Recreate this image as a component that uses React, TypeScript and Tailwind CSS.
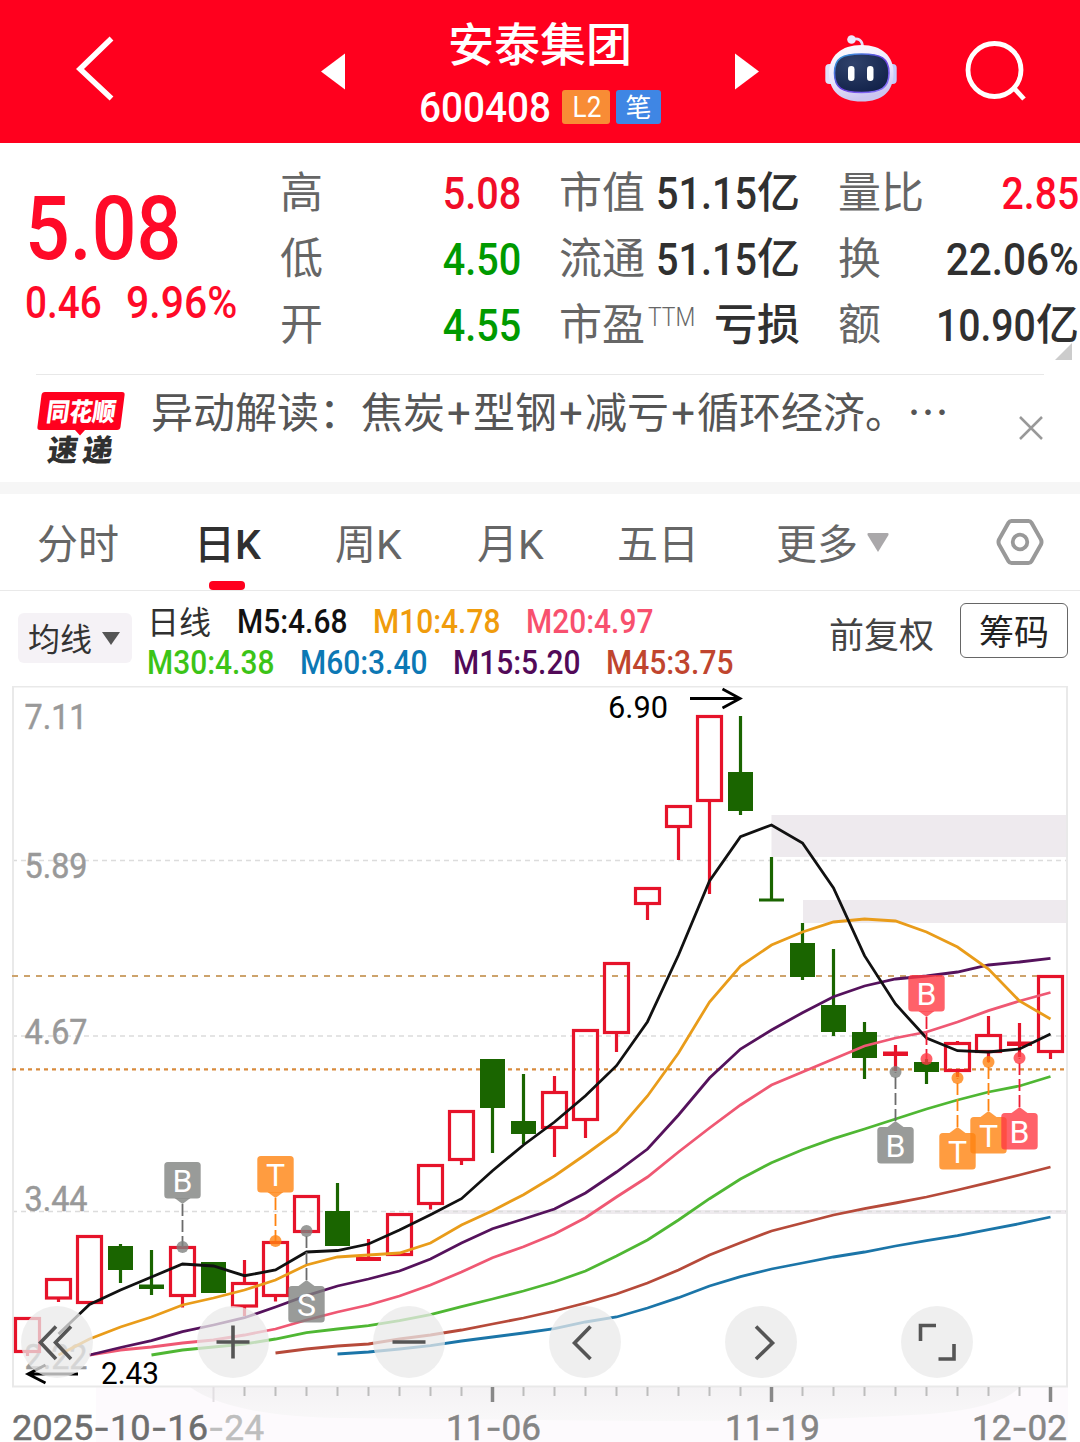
import type { ReactNode } from "react";

type Candle = {
  top: number;
  bottom: number;
  high?: number;
  low?: number;
  up: boolean;
};

const up = (top: number, bottom: number, high?: number, low?: number): Candle => ({
  top,
  bottom,
  high,
  low,
  up: true,
});
const down = (top: number, bottom: number, high?: number, low?: number): Candle => ({
  top,
  bottom,
  high,
  low,
  up: false,
});

const candles: Candle[] = [
  up(1317, 1353, undefined, 1356),
  up(1278, 1299.5, undefined, 1302),
  up(1235, 1304),
  down(1246, 1270, 1244, 1283),
  down(1284.5, 1289, 1250, 1295),
  up(1246, 1297, undefined, 1307.5),
  down(1262, 1293),
  up(1282, 1307.5, 1260, 1316),
  up(1241, 1297, undefined, 1301.5),
  up(1195, 1233),
  down(1211, 1246, 1183),
  up(1257, 1261, 1239),
  up(1213, 1256),
  up(1164, 1205, undefined, 1209.5),
  up(1110, 1161, undefined, 1165),
  down(1059, 1108, undefined, 1153),
  down(1121, 1134, 1074, 1144),
  up(1091, 1129, 1076, 1157),
  up(1029, 1121, undefined, 1138),
  up(962, 1034, undefined, 1052),
  up(887, 905, undefined, 920),
  up(805, 828, undefined, 860),
  up(715, 802, undefined, 894),
  down(772, 811, 716, 815),
  down(898.5, 901.5, 857),
  down(943, 977, 923, 980),
  down(1005, 1032, 949, 1036),
  down(1032, 1058, 1022, 1079),
  up(1051.5, 1056, 1045, 1071),
  down(1062, 1072, 1059, 1084),
  up(1042, 1072, 1041, 1077),
  up(1034, 1053, 1016, 1062),
  up(1041.5, 1046, 1023, 1057),
  up(975, 1053, undefined, 1059),
];

const averages = [
  {
    color: "#1b75a8",
    from: 10,
    ys: [1354, 1352, 1349, 1345.7, 1341, 1337, 1333, 1328.7, 1322, 1317, 1308, 1297.7, 1286, 1276.7, 1269, 1263, 1257, 1252, 1246, 1240.7, 1235.7, 1229.7, 1223.7, 1217],
  },
  {
    color: "#b64a3a",
    from: 8,
    ys: [1353, 1349, 1346, 1344, 1339, 1335, 1330, 1324, 1318, 1311, 1303, 1294, 1283, 1270, 1255, 1242.7, 1231, 1223, 1215, 1208.7, 1203, 1197, 1190, 1182.7, 1175, 1167],
  },
  {
    color: "#4fb733",
    from: 4,
    ys: [1355, 1350, 1347, 1344, 1339, 1332.7, 1329, 1325.7, 1320.7, 1314.7, 1306.7, 1299, 1291, 1282, 1271, 1256, 1240, 1220, 1198.7, 1179, 1162.7, 1149.7, 1138.7, 1129, 1119, 1109, 1100, 1092, 1086, 1076.5],
  },
  {
    color: "#ef5873",
    from: 2,
    ys: [1355, 1350, 1347, 1343, 1340, 1335, 1329, 1320, 1312, 1305, 1296, 1285, 1272, 1257.7, 1246.7, 1234, 1217.7, 1197, 1177, 1152, 1128, 1105, 1085, 1072, 1059, 1046, 1038, 1032, 1022, 1010.7, 1001, 992.5],
  },
  {
    color: "#55125c",
    from: 2,
    ys: [1355, 1347.5, 1340.7, 1331.7, 1325, 1317.7, 1307, 1295.7, 1286, 1279, 1271, 1259, 1243, 1228.7, 1219, 1209, 1193, 1172, 1149, 1115, 1078, 1049, 1030, 1012.7, 996.7, 986, 979, 976, 972, 965, 962, 958.3],
  },
  {
    color: "#e99c1a",
    from: 1,
    ys: [1355, 1339, 1327, 1317, 1305, 1298, 1290, 1280, 1265, 1257, 1255, 1253, 1243, 1225, 1210.7, 1194.7, 1176, 1154.5, 1132, 1096, 1053, 1002, 966, 945, 932, 922, 919, 921, 932, 947, 969, 1001, 1019],
  },
  {
    color: "#111111",
    from: 1,
    ys: [1334, 1304.5, 1290, 1277, 1264, 1266, 1275.7, 1270, 1252, 1250.5, 1244, 1230, 1214.7, 1198.7, 1170.7, 1145, 1122, 1095.7, 1065.7, 1021.7, 955, 881, 836.7, 825, 843, 888, 955.7, 1004, 1038, 1050.7, 1052, 1049, 1034],
  },
];

const tags = [
  { i: 5, y: 1162, dot: 1247, label: "B", fill: "#7f827f", line: "#6b6b6b" },
  { i: 8, y: 1156, dot: 1241, label: "T", fill: "#ff8310", line: "#ff8310" },
  { i: 9, y: 1286, dot: 1231, label: "S", fill: "#7f827f", line: "#6b6b6b" },
  { i: 28, y: 1127, dot: 1072, label: "B", fill: "#7f827f", line: "#6b6b6b" },
  { i: 29, y: 975, dot: 1059, label: "B", fill: "#ff3a43", line: "#ee1c34" },
  { i: 30, y: 1133, dot: 1078, label: "T", fill: "#ff8310", line: "#ff8310" },
  { i: 31, y: 1117, dot: 1062, label: "T", fill: "#ff8310", line: "#ff8310" },
  { i: 32, y: 1113, dot: 1058, label: "B", fill: "#ff3a43", line: "#ee1c34" },
];

const priceLabels = [
  { text: "7.11", y: 728.5 },
  { text: "5.89", y: 878 },
  { text: "4.67", y: 1044 },
  { text: "3.44", y: 1211 },
  { text: "2.22", y: 1368.5 },
];

const xAt = (i: number) => 27.5 + 31 * i;

const Num = ({ children, className = "" }: { children: ReactNode; className?: string }) => (
  <span className={`inline-block whitespace-nowrap font-medium ${className}`}>{children}</span>
);

const Robot = () => (
  <svg width="72" height="68" viewBox="0 0 72 68">
    <defs>
      <linearGradient id="shell" x1="0" y1="0" x2="0.3" y2="1">
        <stop offset="0" stopColor="#ffffff" />
        <stop offset="0.6" stopColor="#ebe6fc" />
        <stop offset="1" stopColor="#cbc5f0" />
      </linearGradient>
      <linearGradient id="rim" x1="0" y1="0" x2="1" y2="1">
        <stop offset="0" stopColor="#2ba7d8" />
        <stop offset="0.5" stopColor="#6b3fe0" />
        <stop offset="1" stopColor="#8a7bff" />
      </linearGradient>
      <radialGradient id="visor" cx="0.35" cy="0.25" r="0.8">
        <stop offset="0" stopColor="#30426b" />
        <stop offset="1" stopColor="#12224a" />
      </radialGradient>
    </defs>
    <path d="M27 4.500 C33 2.500 37.500 5 37.500 12" fill="none" stroke="#e9e2fb" strokeWidth="2.800" />
    <circle cx="26.500" cy="4.500" r="4.300" fill="#eee8fc" />
    <rect x="0.300" y="29" width="10" height="20" rx="4" fill="#e2e0fa" />
    <rect x="61.700" y="29" width="10" height="20" rx="4" fill="#c4cbfa" />
    <path
      d="M36.500 10 C57 10 68.500 21 68.500 38 C68.500 56 58 66.500 36.500 66.500 C15 66.500 4 56 4 38 C4 21 16 10 36.500 10 Z"
      fill="url(#shell)"
    />
    <path
      d="M36.500 19 C56 19 64 23 64 38 C64 53 56 57.500 36.500 57.500 C17 57.500 9.500 53 9.500 38 C9.500 23 17 19 36.500 19 Z"
      fill="url(#visor)"
      stroke="url(#rim)"
      strokeWidth="1.600"
    />
    <rect x="23" y="31" width="6.500" height="15" rx="3.250" fill="#fff" />
    <rect x="42" y="31" width="6.500" height="15" rx="3.250" fill="#fff" />
  </svg>
);

const Header = () => (
  <header className="flex h-[143px] items-start bg-[#ff001e] text-white">
    <svg className="mt-[35px] ml-[75px]" width="40" height="67" viewBox="0 0 40 67">
      <path d="M36.500 3.500 L5 34 L36.500 63.500" fill="none" stroke="#fff" strokeWidth="5.500" />
    </svg>
    <svg className="mt-[53px] ml-[206px]" width="24" height="37" viewBox="0 0 24 37">
      <path d="M0 18.500 L24 0.500 V36.500 Z" fill="#fff" />
    </svg>
    <div className="ml-[63px] flex w-[264px] flex-col items-center">
      <h1 className="mt-[17px] text-[46px] leading-[56px] font-medium">安泰集团</h1>
      <div className="mt-[9px] flex h-[50px] w-full items-center pl-[11px]">
        <span className="w-[143px]">
          <Num className="origin-left scale-x-90 text-[43px] leading-[50px]">600408</Num>
        </span>
        <span className="flex h-[34px] w-[48px] items-center justify-center rounded-[3px] bg-[#f88c35] pl-px text-[29px] leading-none">
          <span className="inline-block scale-x-90">L2</span>
        </span>
        <span className="ml-[6px] flex h-[34px] w-[45px] items-center justify-center rounded-[3px] bg-[#3f86e4] pt-[2px] text-[26px] leading-none">
          笔
        </span>
      </div>
    </div>
    <svg className="mt-[53px] ml-[63px]" width="24" height="37" viewBox="0 0 24 37">
      <path d="M24 18.500 L0 0.500 V36.500 Z" fill="#fff" />
    </svg>
    <div className="mt-[35px] ml-[66px]">
      <Robot />
    </div>
    <svg className="mt-[39px] ml-[68px]" width="64" height="64" viewBox="0 0 64 64">
      <circle cx="29.500" cy="31" r="26.500" fill="none" stroke="#fff" strokeWidth="4.800" />
      <path d="M48 48 L59 60" stroke="#fff" strokeWidth="4.800" />
    </svg>
  </header>
);

const Cell = ({ label, children }: { label: ReactNode; children: ReactNode }) => (
  <div className="flex h-[66px] items-center justify-between">
    <span className="text-[43px] text-[#666]">{label}</span>
    <span className="flex items-center text-[43px] font-medium text-[#303030]">{children}</span>
  </div>
);

const Quote = () => (
  <section className="relative flex h-[231px] pt-[17px] leading-none">
    <div className="w-[280px] pl-[25px] text-[#ff0a28]">
      <div className="mt-[24px] h-[90px]">
        <Num className="origin-left scale-x-[0.885] text-[89px] leading-[90px]">5.08</Num>
      </div>
      <div className="mt-[4px] flex text-[44px] leading-[50px]">
        <span className="w-[101px]">
          <Num className="origin-left scale-x-[0.88]">0.46</Num>
        </span>
        <Num className="origin-left scale-x-[0.93]">9.96%</Num>
      </div>
    </div>
    <div className="w-[241px]">
      <Cell label="高">
        <Num className="origin-right scale-x-[0.88] text-[45px] text-[#f00d28]">5.08</Num>
      </Cell>
      <Cell label="低">
        <Num className="origin-right scale-x-[0.88] text-[45px] text-[#009a00]">4.50</Num>
      </Cell>
      <Cell label="开">
        <Num className="origin-right scale-x-[0.88] text-[45px] text-[#009a00]">4.55</Num>
      </Cell>
    </div>
    <div className="ml-[38px] w-[241px]">
      <Cell label="市值">
        <span className="w-[101px]">
          <Num className="origin-left scale-x-[0.88] text-[45px]">51.15</Num>
        </span>
        亿
      </Cell>
      <Cell label="流通">
        <span className="w-[101px]">
          <Num className="origin-left scale-x-[0.88] text-[45px]">51.15</Num>
        </span>
        亿
      </Cell>
      <Cell
        label={
          <>
            市盈
            <span className="relative -top-[14px] ml-[3px] inline-block w-[46px] origin-left scale-x-[0.88] text-[26px] font-light">
              TTM
            </span>
          </>
        }
      >
        亏损
      </Cell>
    </div>
    <div className="ml-[38px] w-[241px]">
      <Cell label="量比">
        <Num className="origin-right scale-x-[0.87] text-[45px] text-[#ff0a28]">2.85</Num>
      </Cell>
      <Cell label="换">
        <Num className="origin-right scale-x-[0.9] text-[45px]">22.06%</Num>
      </Cell>
      <Cell label="额">
        <Num className="origin-right scale-x-[0.87] text-[45px]">10.90</Num>亿
      </Cell>
    </div>
    <svg className="absolute top-[200px] left-[1055px]" width="17" height="17" viewBox="0 0 17 17">
      <path d="M17 0 V17 H0 Z" fill="#ccc" />
    </svg>
  </section>
);

const Plus = () => <span className="inline-block w-[28px] text-center">+</span>;

const News = () => (
  <section className="mx-[36px] flex h-[108px] border-t border-[#e8e8e8]">
    <svg className="mt-[16px] shrink-0" width="90" height="76" viewBox="36 391 90 76">
      <path
        d="M45 392 H122 Q125 392 124.600 395 L120.500 427 Q120 430 117 430 H85 L80 435.500 L75 430 H40 Q37 430 37.400 427 L41.500 395 Q42 392 45 392 Z"
        fill="#ff001e"
      />
      <text
        transform="translate(45.500 420.500) skewX(-8)"
        fontSize="25.500"
        fontWeight="900"
        fill="#fff"
        textLength="69"
        lengthAdjust="spacingAndGlyphs"
      >
        同花顺
      </text>
      <text
        transform="translate(46.500 461) skewX(-8)"
        fontSize="30"
        fontWeight="900"
        fill="#303030"
        textLength="65"
      >
        速递
      </text>
    </svg>
    <p className="ml-[25px] w-[830px] shrink-0 whitespace-nowrap pt-[7px] text-[42px] leading-[56px] text-[#555]">
      异动解读：焦炭
      <Plus />
      型钢
      <Plus />
      减亏
      <Plus />
      循环经济。
      <span className="font-['Noto_Sans_CJK_SC']">⋯</span>
    </p>
    <svg className="mt-[41px] ml-[38px] shrink-0" width="24" height="24" viewBox="0 0 24 24">
      <path d="M1 1 L23 23 M23 1 L1 23" stroke="#999" strokeWidth="2.500" />
    </svg>
  </section>
);

const Tabs = () => (
  <nav className="relative flex h-[97px] items-center border-b border-[#e9e9e9] pl-[37px] text-[41px] leading-none text-[#666]">
    <div className="flex pt-[6px]">
      <span className="w-[157px]">分时</span>
      <span className="w-[141px] font-medium text-[#303030]">日K</span>
      <span className="w-[142px]">周K</span>
      <span className="w-[140px]">月K</span>
      <span className="w-[159px]">五日</span>
      <span className="w-[91px]">更多</span>
    </div>
    <svg width="22" height="19" viewBox="0 0 22 19">
      <path d="M1.500 0 H20.500 Q22 0 21.500 2 L11 19 L0.500 2 Q0 0 1.500 0 Z" fill="#aaa8aa" />
    </svg>
    <svg className="ml-[107px]" width="48" height="48" viewBox="0 0 48 48">
      <path
        d="M15.500 3 H32.500 Q34.500 3 35.500 4.800 L45 21.500 Q46 24 45 26.500 L35.500 43.200 Q34.500 45 32.500 45 H15.500 Q13.500 45 12.500 43.200 L3 26.500 Q2 24 3 21.500 L12.500 4.800 Q13.500 3 15.500 3 Z"
        fill="none"
        stroke="#999"
        strokeWidth="4"
      />
      <circle cx="24" cy="24" r="7.300" fill="none" stroke="#999" strokeWidth="3.800" />
    </svg>
    <span className="absolute bottom-0 left-[209px] h-[9px] w-[36px] rounded-[4px] bg-[#ff001e]" />
  </nav>
);

const Legend = () => (
  <section className="flex h-[95px] text-[34px] leading-[41px]">
    <div className="mt-[22px] ml-[18px] flex h-[50px] w-[114px] items-center rounded-[6px] bg-[#f5f2f6] pl-[10px] text-[32px] text-[#333]">
      <span className="pt-[5px]">均线</span>
      <svg className="ml-[10px]" width="18" height="13" viewBox="0 0 18 13">
        <path d="M0 0 H18 L9 13 Z" fill="#555" />
      </svg>
    </div>
    <div className="ml-[15px] w-[682px] pt-[10px]">
      <div className="flex h-[41px]">
        <span className="w-[90px] pt-[2px] text-[32px] text-[#303030]">日线</span>
        <span className="w-[136px] text-[#111]">
          <Num className="origin-left scale-x-[0.88]">M5:4.68</Num>
        </span>
        <span className="w-[153px] text-[#f09c0c]">
          <Num className="origin-left scale-x-[0.88]">M10:4.78</Num>
        </span>
        <span className="text-[#f8506e]">
          <Num className="origin-left scale-x-[0.88]">M20:4.97</Num>
        </span>
      </div>
      <div className="flex h-[41px]">
        <span className="w-[153px] text-[#3cc417]">
          <Num className="origin-left scale-x-[0.88]">M30:4.38</Num>
        </span>
        <span className="w-[153px] text-[#0c78b4]">
          <Num className="origin-left scale-x-[0.88]">M60:3.40</Num>
        </span>
        <span className="w-[153px] text-[#520a58]">
          <Num className="origin-left scale-x-[0.88]">M15:5.20</Num>
        </span>
        <span className="text-[#c0452e]">
          <Num className="origin-left scale-x-[0.88]">M45:3.75</Num>
        </span>
      </div>
    </div>
    <span className="mt-[25px] w-[131px] text-[35px] text-[#444]">前复权</span>
    <button className="mt-[12px] h-[55px] w-[108px] rounded-[6px] border border-[#666] pt-[6px] text-[35px] leading-none text-[#222]">
      筹码
    </button>
  </section>
);

const CandleShape = ({ candle, i }: { candle: Candle; i: number }) => {
  const x = xAt(i);
  const { top, bottom, high, low } = candle;
  const color = candle.up ? "#e6132a" : "#1a6500";
  const flat = bottom - top < 6;
  return (
    <g>
      {high !== undefined && (
        <path d={`M${x} ${high} V${top + 1}`} stroke={color} strokeWidth="3.200" />
      )}
      {low !== undefined && (
        <path d={`M${x} ${bottom - 1} V${low}`} stroke={color} strokeWidth="3.200" />
      )}
      {candle.up && !flat ? (
        <rect
          x={x - 12}
          y={top + 1.5}
          width="24"
          height={bottom - top - 3}
          fill="none"
          stroke={color}
          strokeWidth="3.200"
        />
      ) : (
        <rect x={x - 12.5} y={top} width="25" height={bottom - top} fill={color} />
      )}
    </g>
  );
};

const DateLabel = ({ x, width, fill, text }: { x: number; width: number; fill: string; text: string }) => (
  <text
    x={x}
    y="1440"
    fontSize="35"
    fill={fill}
    stroke={fill}
    strokeWidth="0.500"
    textLength={width}
    lengthAdjust="spacingAndGlyphs"
  >
    {text.split("-").map((part, n) => (
      <tspan key={n}>
        {n > 0 && <tspan fontFamily="Inter">-</tspan>}
        {part}
      </tspan>
    ))}
  </text>
);

const Chart = () => (
  <svg className="block" width="1080" height="756" viewBox="0 686 1080 756">
    <defs>
      <linearGradient id="axis" x1="0" y1="0" x2="0" y2="1">
        <stop offset="0" stopColor="#f4f2f4" />
        <stop offset="1" stopColor="#f9f8f9" />
      </linearGradient>
    </defs>
    <rect x="96" y="1387" width="972" height="55" fill="#fdfafd" />
    <path d="M190 1387 H1020 Q1000 1408 930 1414 Q800 1422 640 1421 L340 1418 Q230 1416 190 1387 Z" fill="url(#axis)" />

    {/* price gaps */}
    <rect x="771.500" y="815" width="296" height="42" fill="#eeeaee" />
    <rect x="803" y="900" width="264" height="23" fill="#eeeaee" />
    <rect x="432" y="1210" width="635" height="4" fill="#eeeaee" />

    <path
      d="M12 860.500 H1067 M12 1036 H1067 M12 1211.500 H1067"
      stroke="#dcdcdc"
      strokeWidth="1.300"
      strokeDasharray="5 4"
    />
    <rect x="13" y="686.500" width="1054" height="700" fill="none" stroke="#e9e9e9" strokeWidth="2" />
    <path d="M12 976 H1067" stroke="#cda36c" strokeWidth="2" strokeDasharray="6 6" />
    <path d="M12 1069.300 H1067" stroke="#d88a3c" strokeWidth="2.200" strokeDasharray="4 4" />

    {priceLabels.map((label) => (
      <text
        key={label.text}
        x="24.500"
        y={label.y}
        fontSize="35"
        fill="#999"
        stroke="#999"
        strokeWidth="0.500"
        textLength="63"
        lengthAdjust="spacingAndGlyphs"
      >
        {label.text}
      </text>
    ))}

    {candles.map((candle, i) => (
      <CandleShape key={i} candle={candle} i={i} />
    ))}

    {averages.map((line) => (
      <polyline
        key={line.color}
        points={line.ys.map((y, n) => `${xAt(line.from + n)},${y}`).join(" ")}
        fill="none"
        stroke={line.color}
        strokeWidth="2.800"
      />
    ))}

    {tags.map(({ i, y, dot, label, fill, line }) => {
      const x = xAt(i);
      const above = y < dot;
      const tip = above ? y + 42 : y - 6;
      const edge = above ? y + 36 : y;
      return (
        <g key={i}>
          <path
            d={`M${x} ${tip} V${dot}`}
            stroke={line}
            strokeWidth="1.800"
            strokeDasharray="12 4"
          />
          <circle cx={x} cy={dot} r="6" fill={fill} fillOpacity="0.8" />
          <g fill={fill} fillOpacity="0.8">
            <path d={`M${x - 8} ${edge} L${x} ${tip} L${x + 8} ${edge} Z`} />
            <rect x={x - 18.2} y={y} width="36.400" height="36.400" rx="3.500" />
          </g>
          <text x={x} y={y + 29.5} fontSize="32" fill="#fff" textAnchor="middle">
            {label}
          </text>
        </g>
      );
    })}

    <g fill="none" stroke="#000" strokeWidth="2.800">
      <path d="M690 698.500 H740 M722.500 689 L740 698.500 L722.500 708" />
      <path d="M78 1374 H28 M45.500 1365 L28 1374 L45.500 1383" />
    </g>
    <text x="608" y="717.500" fontSize="31" textLength="60" lengthAdjust="spacingAndGlyphs">
      6.90
    </text>
    <text x="101" y="1384" fontSize="31" textLength="58" lengthAdjust="spacingAndGlyphs">
      2.43
    </text>

    {candles.map((_, i) => {
      if (i < 6) return null;
      const major = i === 15 || i === 24 || i === 33;
      return (
        <path
          key={i}
          d={`M${xAt(i)} 1387 V${major || i === 6 ? 1402 : 1396}`}
          stroke={i === 6 ? "#e2dfe2" : major ? "#888" : "#bdbdbd"}
          strokeWidth={major ? 3.5 : 2}
        />
      );
    })}

    <DateLabel x={12} width={196} fill="#6e6e6e" text="2025-10-16" />
    <DateLabel x={208} width={56} fill="#bebebe" text="-24" />
    <DateLabel x={446} width={95} fill="#858585" text="11-06" />
    <DateLabel x={725} width={95} fill="#858585" text="11-19" />
    <DateLabel x={972} width={95} fill="#858585" text="12-02" />
  </svg>
);

const controls = [
  { name: "fast-back", d: "M35 20.500 L19.500 36.500 L35 53 M50 20.500 L34.500 36.500 L50 53" },
  { name: "zoom-in", d: "M19.500 36 H52.500 M36 19.500 V52.500" },
  { name: "zoom-out", d: "M19.500 36 H52.500" },
  { name: "back", d: "M41.500 20.500 L25.500 37 L41.500 53" },
  { name: "forward", d: "M31 20.500 L47.500 37 L31 53" },
  { name: "fullscreen", d: "M35 19.500 H19.500 V35 M53 38 V53 H37.500" },
];

const Controls = () => (
  <div className="absolute top-[620px] left-[21px] flex gap-[104px]">
    {controls.map((control) => (
      <button key={control.name} className="size-[72px] rounded-full bg-[#e9e9e9]/75">
        <svg width="72" height="72" viewBox="0 0 72 72">
          <path d={control.d} fill="none" stroke="#555" strokeWidth="3.600" />
        </svg>
      </button>
    ))}
  </div>
);

const App = () => {
  return (
    <div className="h-[1442px] w-[1080px] overflow-hidden bg-white font-['Roboto','Noto_Sans_CJK_SC',sans-serif]">
      <Header />
      <Quote />
      <News />
      <div className="h-[12px] bg-[#f6f6f6]" />
      <Tabs />
      <Legend />
      <div className="relative">
        <Chart />
        <Controls />
      </div>
    </div>
  );
};

export default App;
